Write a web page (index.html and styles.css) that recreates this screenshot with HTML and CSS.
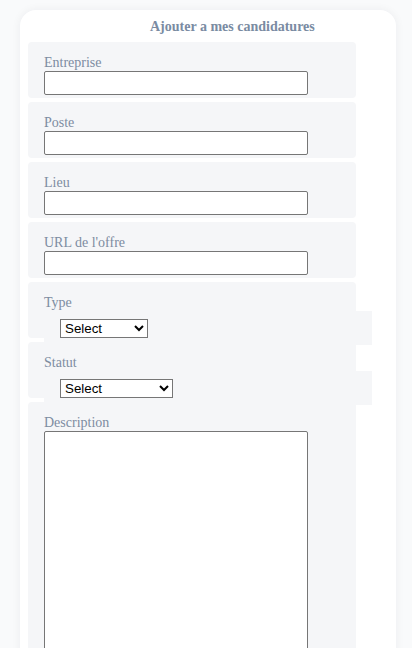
FILE: index.html
```html
<!DOCTYPE html>
<html lang="fr">
<head>
<meta charset="utf-8">
<title>Ajouter a mes candidatures</title>
<link rel="stylesheet" href="styles.css">
</head>
<body>
<div class="card">
  <h2 class="title">Ajouter a mes candidatures</h2>
  <div class="fields">
    <div class="field">
      <label class="label">Entreprise</label>
      <input class="input" type="text">
    </div>
    <div class="field">
      <label class="label">Poste</label>
      <input class="input" type="text">
    </div>
    <div class="field">
      <label class="label">Lieu</label>
      <input class="input" type="text">
    </div>
    <div class="field">
      <label class="label">URL de l'offre</label>
      <input class="input" type="text">
    </div>
    <div class="field field-select">
      <label class="label">Type</label>
      <div class="select-wrap">
        <select class="select select-type"><option>Select</option></select>
      </div>
    </div>
    <div class="field field-select">
      <label class="label">Statut</label>
      <div class="select-wrap">
        <select class="select select-status"><option>Select</option></select>
      </div>
    </div>
    <div class="field field-text">
      <label class="label">Description</label>
      <textarea class="textarea"></textarea>
    </div>
  </div>
</div>
</body>
</html>
```

FILE: styles.css
```css
html, body {
  margin: 0;
  padding: 0;
  background: #f9fafb;
}

body {
  padding: 10px 0 0 20px;
  font-family: "Liberation Serif", "Times New Roman", serif;
}

.card {
  width: 376px;
  box-sizing: border-box;
  background: #ffffff;
  border-radius: 16px;
  box-shadow: 0 0 10px rgba(20, 30, 50, 0.06);
  padding: 9px 8px 20px;
}

.title {
  margin: 0 0 7px;
  padding-left: 122px;
  font-size: 14px;
  line-height: 16px;
  font-weight: 700;
  color: #7a8ba2;
}

.fields {
  display: flex;
  flex-direction: column;
  gap: 4px;
}

.field {
  width: 328px;
  box-sizing: border-box;
  background: #f5f6f8;
  border-radius: 4px;
  padding: 13px 16px 3px;
}

.label {
  display: block;
  font-size: 14px;
  line-height: 16px;
  color: #7d8ca1;
}

.input {
  display: block;
  box-sizing: border-box;
  width: 264px;
  height: 24px;
  margin: 0;
  padding: 1px 2px;
  border: 1px solid #767676;
  border-radius: 2px;
  background: #ffffff;
  font: 13.33px "Liberation Sans", Arial, sans-serif;
}

.field-select {
  height: 56px;
  min-height: 0;
  padding-bottom: 0;
}

.select-wrap {
  width: 328px;
  height: 34px;
  box-sizing: border-box;
  background: #f5f6f8;
  padding: 8px 16px 0;
}

.select {
  display: block;
  height: 19px;
  margin: 0;
  box-sizing: border-box;
  font: 13.33px "Liberation Sans", Arial, sans-serif;
  color: #000000;
  background: #ffffff;
  border: 1px solid #767676;
  border-radius: 0;
}

.select-type {
  width: 88px;
}

.select-status {
  width: 113px;
}

.field-text {
  padding-bottom: 16px;
}

.textarea {
  display: block;
  box-sizing: border-box;
  width: 264px;
  height: 300px;
  margin: 0;
  border: 1px solid #767676;
  border-radius: 2px;
  background: #ffffff;
  resize: none;
}
```
